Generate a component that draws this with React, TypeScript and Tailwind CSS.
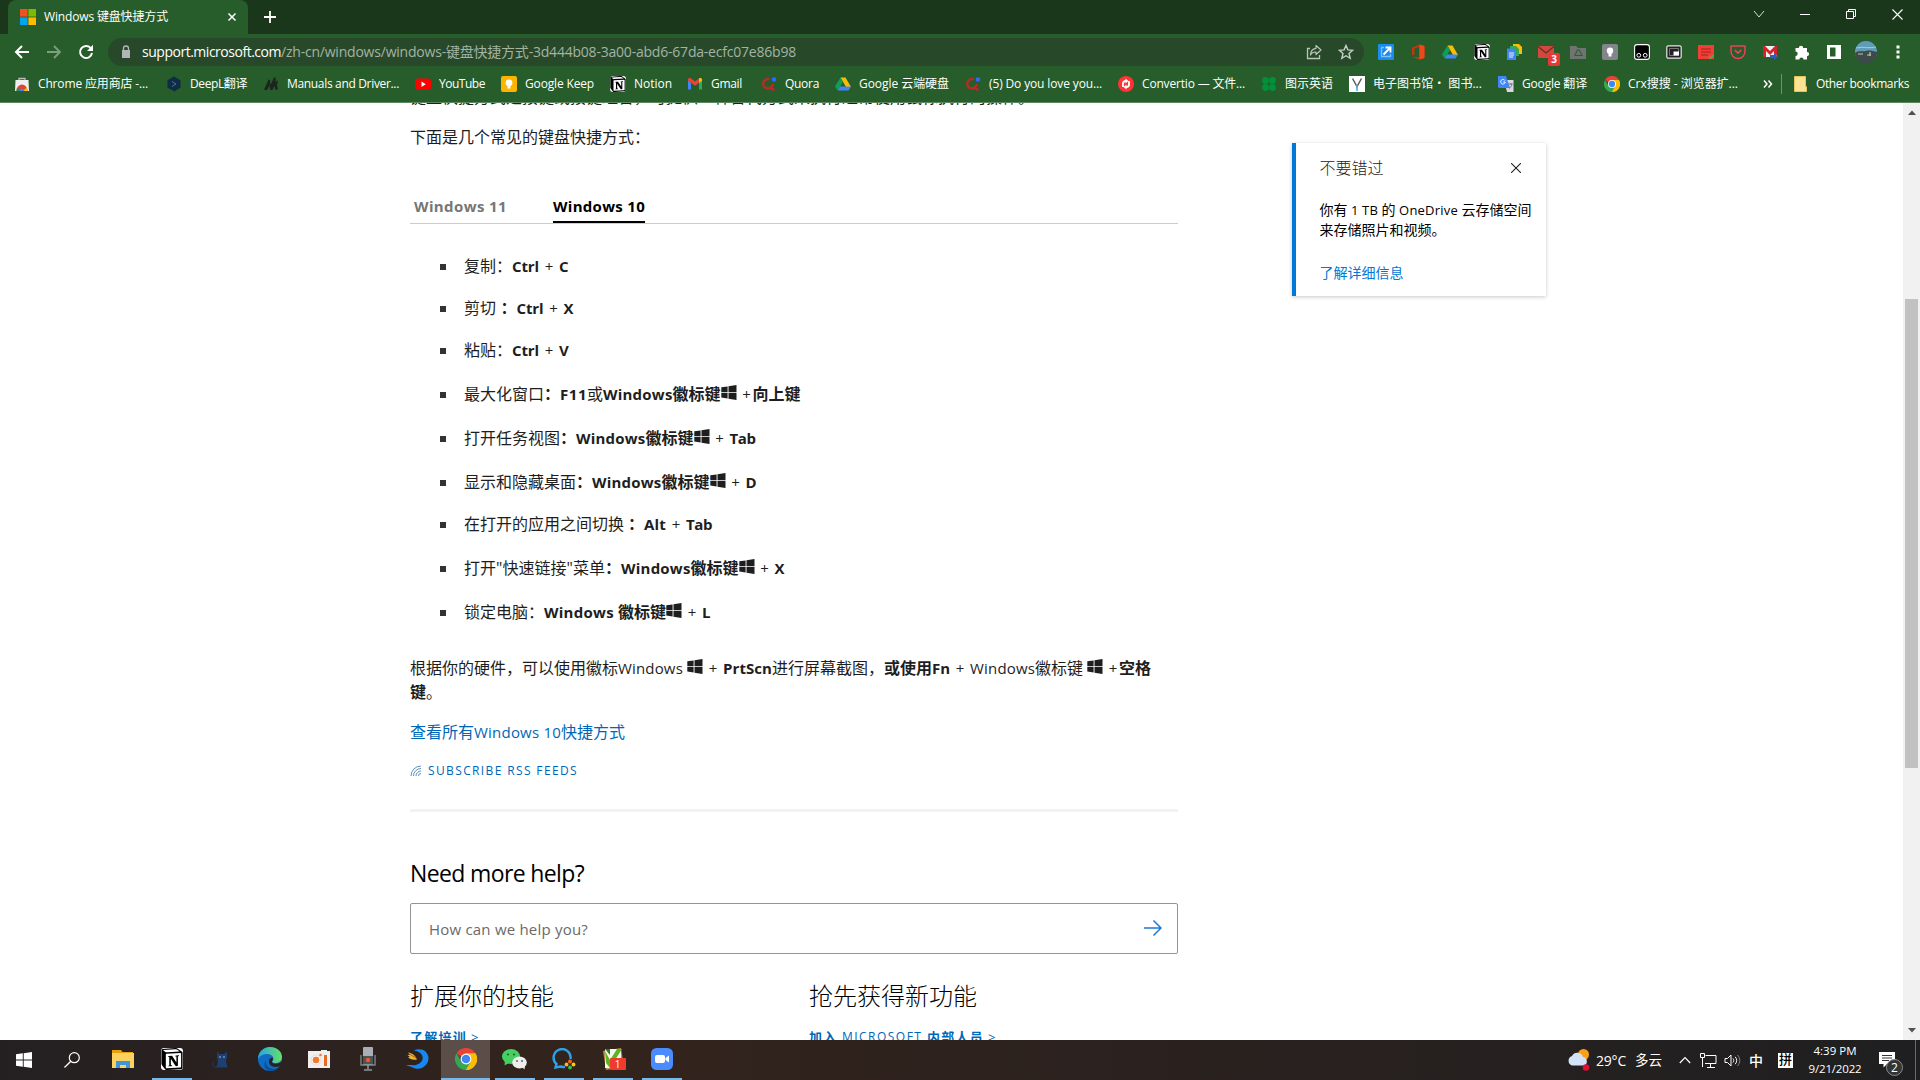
import React, { useLayoutEffect, useRef, useState } from "react";
import { SiNotion } from "react-icons/si";

type Kids = { children?: React.ReactNode };

/* Text set to an exact advance width by spreading the difference between its letters. */
function Fit({ w, className = "", children }: { w: number; className?: string; children: string }) {
  const ref = useRef<HTMLSpanElement>(null);
  const [spacing, setSpacing] = useState(0);
  useLayoutEffect(() => {
    const el = ref.current;
    if (!el) return;
    const natural = el.getBoundingClientRect().width - spacing * children.length;
    setSpacing((w - natural) / children.length);
  }, [w, children]);
  return (
    <span ref={ref} className={"inline-block whitespace-pre " + className} style={{ letterSpacing: `${spacing}px` }}>
      {children}
    </span>
  );
}

function Svg({ s = 16, h, vb = "0 0 16 16", className = "", children }: Kids & { s?: number; h?: number; vb?: string; className?: string }) {
  return (
    <svg width={s} height={h ?? s} viewBox={vb} fill="none" className={"shrink-0 " + className}>
      {children}
    </svg>
  );
}

const MsLogo = () => (
  <Svg>
    <path d="M0 0h7.6v7.6H0z" fill="#f25022" />
    <path d="M8.4 0H16v7.6H8.4z" fill="#7fba00" />
    <path d="M0 8.4h7.6V16H0z" fill="#00a4ef" />
    <path d="M8.4 8.4H16V16H8.4z" fill="#ffb900" />
  </Svg>
);

const Chrome = ({ s = 16 }: { s?: number }) => (
  <Svg s={s} vb="0 0 24 24">
    <path d="M12 12 1.6 6A12 12 0 0 1 22.4 6z" fill="#ea4335" />
    <path d="M12 12V6h10.4A12 12 0 0 1 12 24z" fill="#fbbc04" />
    <path d="M12 24A12 12 0 0 1 1.6 6l5.2 9 5.2 3 5.2-3z" fill="#34a853" />
    <path d="M17.2 15 12 24A12 12 0 0 0 22.4 6H12z" fill="#fbbc04" />
    <circle cx="12" cy="12" r="5.9" fill="#fff" />
    <circle cx="12" cy="12" r="4.7" fill="#4285f4" />
  </Svg>
);

const Drive = () => (
  <Svg>
    <path d="M5.5 1.5h5L16 11h-5z" fill="#fbbc04" />
    <path d="M5.5 1.5 8 6 2.700 14.500 0 10.500z" fill="#0f9d58" />
    <path d="M5 10.500h11l-2.500 4H2.700z" fill="#4285f4" />
  </Svg>
);

const Notion = ({ s = 16 }: { s?: number }) => (
  <span className="flex shrink-0 rounded-[3px] bg-white text-black">
    <SiNotion size={s} />
  </span>
);

const Quora = () => (
  <Svg>
    <path d="M8.500 3.200A4.800 4.800 0 1 0 11.800 8M8.500 10.500c1.500 2.500 3 3.300 5 3" stroke="#b92b27" strokeWidth="2.400" />
    <circle cx="13" cy="3.500" r="2.300" fill="#2e69ff" />
  </Svg>
);

const Gmail = () => (
  <Svg>
    <path d="M1 4v9.500h3V7z" fill="#4285f4" />
    <path d="M12 7v6.500h3V4z" fill="#34a853" />
    <path d="M1 4.500V3.500C1 2 3 1.700 4 2.500L8 5.500l4-3v4.300L8 9.700 1 4.500z" fill="#ea4335" />
    <path d="M12 2.500c1-.8 3-.5 3 1v1.500l-3 2z" fill="#fbbc04" />
  </Svg>
);

const bookmarks: { icon: React.ReactNode; label: string; w: number; cell: string }[] = [
  {
    icon: (
      <Svg>
        <path d="M5 4V2.500h6V4" stroke="#bbb" strokeWidth="1.300" />
        <path d="M1.500 4h13L15 15H1z" fill="#eee" />
        <path d="M2.500 15a5.500 6.500 0 0 1 11 0z" fill="#db4437" />
        <path d="M2.500 15a5.500 5.500 0 0 1 1-3.500l3 3.500z" fill="#0f9d58" />
        <path d="M13.500 15a5.500 5.500 0 0 0-.8-3.500L9 15z" fill="#fbbc04" />
        <path d="M5.800 15a2.200 2.200 0 0 1 4.400 0z" fill="#4285f4" />
      </Svg>
    ),
    label: "Chrome 应用商店 -...", w: 110, cell: "w-[152px]",
  },
  {
    icon: (
      <Svg>
        <path d="m8 .5 6.500 3.700v7.600L9.500 14.500 9 16l-1-1-6.500-3.200V4.200z" fill="#0f2b46" />
        <path d="m6 5.500 4 2.500-4 2.500" stroke="#3c7a8c" strokeWidth="1" />
      </Svg>
    ),
    label: "DeepL翻译", w: 57, cell: "w-[97px]",
  },
  {
    icon: <Svg><path d="M1 14 5.500 3.500 7 4l.5 5L11 1.500h1.800L12.500 6l1.500-1.500.8 1L14 9.500l1 3.500-2.500 1-1-4-2 4H7.200L6.500 9.500 4 14z" fill="#1c2420" /></Svg>,
    label: "Manuals and Driver...", w: 112, cell: "w-[152px]",
  },
  {
    icon: <Svg><rect y="2.500" width="16" height="11.500" rx="3" fill="#f00" /><path d="m6.500 5.500 4.200 2.700-4.200 2.700z" fill="#fff" /></Svg>,
    label: "YouTube", w: 46, cell: "w-[86px]",
  },
  {
    icon: <Svg><rect width="16" height="16" rx="2" fill="#fbb400" /><circle cx="8" cy="6.800" r="3.400" fill="#fff" /><path d="M6.500 9h3v3.500h-3z" fill="#fff" /></Svg>,
    label: "Google Keep", w: 69, cell: "w-[109px]",
  },
  { icon: <Notion />, label: "Notion", w: 38, cell: "w-[77px]" },
  { icon: <Gmail />, label: "Gmail", w: 31, cell: "w-[74px]" },
  { icon: <Quora />, label: "Quora", w: 34, cell: "w-[74px]" },
  { icon: <Drive />, label: "Google 云端硬盘", w: 90, cell: "w-[130px]" },
  { icon: <Quora />, label: "(5) Do you love you...", w: 113, cell: "w-[153px]" },
  {
    icon: (
      <Svg>
        <circle cx="8" cy="8" r="8" fill="#ff3333" />
        <path d="M5 11V7.500A2.500 2.500 0 0 1 7.500 5H8M11 5v3.500A2.500 2.500 0 0 1 8.500 11H8" stroke="#fff" strokeWidth="1.900" />
        <path d="m7.500 2.500 3 2.500-3 2.500zM8.500 8.500v5l-3-2.500z" fill="#fff" />
      </Svg>
    ),
    label: "Convertio — 文件...", w: 103, cell: "w-[143px]",
  },
  {
    icon: (
      <Svg>
        {[4.5, 11.5].map((x) => [4.5, 11.5].map((y) => <circle key={`${x}${y}`} cx={x} cy={y} r="3.400" fill="#00913a" />))}
      </Svg>
    ),
    label: "图示英语", w: 48, cell: "w-[88px]",
  },
  {
    icon: (
      <Svg>
        <path d="M0 0h16v16H0z" fill="#fff" />
        <path d="m3.500 2.500 4.500 8 4.500-8" stroke="#555" strokeWidth="1.400" />
        <path d="M8 9v6" stroke="#4aa8d8" strokeWidth="1.600" />
      </Svg>
    ),
    label: "电子图书馆・ 图书...", w: 109, cell: "w-[149px]",
  },
  {
    icon: (
      <Svg>
        <path d="M6 4h9.500v12H9z" fill="#d5d8dc" />
        <path d="M0 0h8l4 12H1.500A1.500 1.500 0 0 1 0 10.500z" fill="#4285f4" />
        <path d="M7 4.600A2.300 2.300 0 1 0 7.300 6H5.200" stroke="#fff" strokeWidth=".9" />
        <path d="M10.500 8h4M12.800 7v1m1.200 0c-.5 2-1.500 3.500-2.800 4.500" stroke="#5f6b7a" strokeWidth=".9" />
      </Svg>
    ),
    label: "Google 翻译", w: 65, cell: "w-[106px]",
  },
  { icon: <Chrome />, label: "Crx搜搜 - 浏览器扩...", w: 110, cell: "w-[156px]" },
];

const extensions: React.ReactNode[] = [
  <Svg><rect width="16" height="16" rx="1" fill="#1a8cf0" /><path d="M6 3.500H3.500v9h9V10" stroke="#7cc0fa" strokeWidth="1.300" /><path d="M5.500 10.500 12 4M7.500 3.500h5v5" stroke="#fff" strokeWidth="1.800" /></Svg>,
  <Svg><path d="m9.500.5 5 1.500v12l-5 1.500L2 13l7-.1V3.200L4.500 4.500v6L2 11.500V3.500z" fill="#c8320c" /><path d="m9.500.5 5 1.500v12l-5 1.500z" fill="#ea4b1e" /></Svg>,
  <Drive />,
  <Notion />,
  <Svg><path d="M7 0h6l3 3v7H7z" fill="#fbbc04" /><path d="M4 2h6l3 3v7H4z" fill="#34a853" /><path d="M1 4.500h6L10 7v9H1z" fill="#4285f4" /><path d="M3 9h5M3 11h5M3 13h4" stroke="#fff" strokeWidth=".9" /></Svg>,
  <span className="relative flex">
    <Svg><path d="M0 2h16v12H0z" fill="#d3483e" /><path d="m0 2.500 8 6.500 8-6.500" stroke="#6d2a22" strokeWidth="1.300" /></Svg>
    <span className="absolute top-[9px] left-[10px] h-[13px] w-[12px] rounded-[2px] bg-[#e53935] text-center text-[10px] leading-[13px] font-bold text-white">3</span>
  </span>,
  <Svg><path d="M0 2h6l2 2h8v11H0z" fill="#6f7471" /><path d="M7.300 6h1.800l3 5.500H5z" stroke="#276329" strokeWidth="1.100" /></Svg>,
  <Svg><rect width="16" height="16" rx="2" fill="#84848c" /><circle cx="8" cy="6.800" r="3.200" fill="#fff" /><path d="M6.500 9h3v3.500h-3z" fill="#fff" /></Svg>,
  <Svg><rect x=".6" y=".6" width="14.800" height="14.800" rx="2.500" fill="#000" stroke="#fff" strokeWidth="1.100" /><circle cx="4.800" cy="11.300" r="1.900" stroke="#fff" /><circle cx="11.200" cy="11.300" r="1.900" stroke="#fff" /></Svg>,
  <Svg><rect x=".8" y="1.800" width="14.400" height="12.400" rx="1.500" fill="#222" stroke="#e8e8e8" strokeWidth="1.200" /><path d="M3.500 4.500h9v7h-9z" stroke="#777" /><path d="M7.500 7.500h5.500v4H7.500z" fill="#fff" /></Svg>,
  <Svg><path d="M0 1h16v14H0z" fill="#ef4037" /><path d="M3 5h10M3 8h10M3 11h7" stroke="#a81f1c" strokeWidth="1.100" /><path d="m11 12.500 1.500 2L15.500 11" stroke="#4caf50" strokeWidth="1.400" /></Svg>,
  <Svg><path d="M1 2h14v5.500a7 7 0 0 1-14 0z" stroke="#ee4056" strokeWidth="1.500" strokeLinejoin="round" /><path d="m4.800 6.200 3.200 3 3.200-3" stroke="#ee4056" strokeWidth="1.700" /></Svg>,
  <Svg><path d="M1 2h14v11H1z" fill="#eee" /><path d="M1 13V2h2l5 5 5-5h2v9h-3V7l-4 4-4-4v6z" fill="#d3232a" /><path d="M8 11h4V9l4 3.500L12 16v-2H8z" fill="#3559c7" /></Svg>,
  <Svg><path d="M1.500 4h3.300a2.200 2.200 0 1 1 4.400 0H13v4a2.100 2.100 0 1 1 0 4.200v3.300H9.500a2.100 2.100 0 1 0-4.200 0H1.500V12a2.200 2.200 0 1 0 0-4.400z" fill="#fff" /></Svg>,
  <Svg><path d="M1 1h14v14H1zM4 3.500v9h5.500v-9z" fill="#fff" fillRule="evenodd" /></Svg>,
];

function TitleBar() {
  return (
    <div className="flex h-[34px] shrink-0 bg-[#1b371b] pl-2">
      <div className="flex h-[34px] w-[240px] items-center rounded-t-lg bg-[#275d2a] pr-[10px] pl-3">
        <MsLogo />
        <Fit w={124} className="ml-2 text-[12px] text-white">Windows 键盘快捷方式</Fit>
        <Svg s={10} vb="0 0 10 10" className="mr-[1px] ml-auto"><path d="m1.500 1.500 7 7m0-7-7 7" stroke="#fff" strokeWidth="1.500" /></Svg>
      </div>
      <Svg s={14} vb="0 0 14 14" className="mt-[10px] ml-[15px]"><path d="M7 1v12M1 7h12" stroke="#fff" strokeWidth="1.800" /></Svg>
      <div className="ml-auto flex h-[28px] items-center text-white">
        <span className="flex w-[46px] justify-center"><Svg s={12} vb="0 0 12 12"><path d="m1 3 5 6 5-6" stroke="#d5dcd5" /></Svg></span>
        <span className="flex w-[46px] justify-center"><Svg s={10} vb="0 0 10 10"><path d="M0 5.500h10" stroke="#fff" /></Svg></span>
        <span className="flex w-[46px] justify-center"><Svg s={10} vb="0 0 10 10"><path d="M.5 2.500h7v7h-7zM2.500 2.500v-2h7v7h-2" stroke="#fff" /></Svg></span>
        <span className="flex w-[46px] justify-center"><Svg s={11} vb="0 0 11 11"><path d="m.5.500 10 10m0-10-10 10" stroke="#fff" strokeWidth="1.100" /></Svg></span>
      </div>
    </div>
  );
}

function Toolbar() {
  return (
    <div className="flex h-[36px] shrink-0 items-center bg-[#275d2a] pl-[14px]">
      <Svg><path d="M15 8H2.500M8 2 2 8l6 6" stroke="#fff" strokeWidth="2" /></Svg>
      <Svg className="ml-4"><path d="M1 8h12.500M8 2l6 6-6 6" stroke="#7c9f7d" strokeWidth="1.800" /></Svg>
      <Svg className="ml-4"><path d="M13 4.500A6 6 0 1 0 14 9" stroke="#fff" strokeWidth="2" /><path d="M15 .8V7H9z" fill="#fff" /></Svg>
      <div className="ml-[14px] flex h-[28px] w-[1256px] items-center rounded-full bg-[#27492a] pl-[13px]">
        <Svg s={10} h={13} vb="0 0 10 13" className="-mt-px"><path d="M1 5h8v8H1z" fill="#b3b5b9" /><path d="M2.500 6V3.500a2.500 2.500 0 0 1 5 0V6" stroke="#b3b5b9" strokeWidth="1.300" /></Svg>
        <Fit w={139} className="mb-[2px] ml-[11px] text-[14px] text-white">support.microsoft.com</Fit>
        <Fit w={515} className="mb-[2px] text-[14px] text-[#a3b3a4]">/zh-cn/windows/windows-键盘快捷方式-3d444b08-3a00-abd6-67da-ecfc07e86b98</Fit>
        <Svg className="mr-4 ml-auto"><path d="M4 4.500H1.500v10h12V11" stroke="#b9c5b9" strokeWidth="1.300" /><path d="M10 1.500 15 6l-5 4.500V8C7 8 5.500 9 4.500 11 4.500 7.500 6.500 4.800 10 4.300z" stroke="#b9c5b9" strokeWidth="1.200" strokeLinejoin="round" /></Svg>
        <Svg className="mr-[10px]"><path d="m8 1.500 1.900 4.400 4.800.4L11 9.500l1.200 4.800L8 11.700l-4.200 2.600L5 9.500 1.300 6.300l4.800-.4z" stroke="#c6d0c6" strokeWidth="1.400" /></Svg>
      </div>
      <div className="ml-[14px] flex gap-4">
        {extensions.map((e, i) => <span key={i} className="flex size-4">{e}</span>)}
      </div>
      <Svg s={22} h={26} vb="0 0 22 26" className="ml-[13px]">
        <ellipse cx="11" cy="13" rx="11" ry="11" fill="#5f9cb8" />
        <path d="M0 14c4-3 8-1 11-2s7 0 11 1a11 11 0 0 1-22 1z" fill="#3c4b48" />
        <path d="M1 9c6-2 12 1 20-1" stroke="#9cc4d4" strokeWidth="1.200" />
        <path d="M3 15h5m4 1h4m-1-3v4" stroke="#c7c3b4" strokeWidth="1.200" />
      </Svg>
      <Svg s={4} h={16} vb="0 0 4 16" className="ml-[19px]"><path d="M.5 1.500h3v3h-3zm0 5h3v3h-3zm0 5h3v3h-3z" fill="#fff" /></Svg>
    </div>
  );
}

function Bookmarks() {
  return (
    <div className="flex h-[33px] shrink-0 items-center border-b border-[#5c865e] bg-[#275d2a] pb-[4px] pl-[14px] text-[12px] text-white">
      {bookmarks.map((b) => (
        <div key={b.label} className={"flex shrink-0 items-center gap-2 " + b.cell}>
          {b.icon}
          <Fit w={b.w} className="mb-px">{b.label}</Fit>
        </div>
      ))}
      <Svg s={10} vb="0 0 10 10" className="ml-[3px]"><path d="m1 1.500 3 3.500-3 3.500M5.500 1.500l3 3.500-3 3.500" stroke="#fff" strokeWidth="1.500" /></Svg>
      <div className="ml-[8px] h-5 w-px bg-[#6f9271]" />
      <Svg s={13} h={16} vb="0 0 13 16" className="ml-[12px]"><path d="M.5.500h11v10h1v5H.5z" fill="#fde293" stroke="#e8c55a" /></Svg>
      <Fit w={93} className="mb-px ml-[9px]">Other bookmarks</Fit>
    </div>
  );
}

const WinKey = ({ className = "" }: { className?: string }) => (
  <svg width="16" height="15" viewBox="0 0 16 15" className={"inline-block align-[0px] " + className}>
    <path d="M.3 2.300 6.600 1.400v5.500H.3zM7.500 1.300 15.500 0v6.900h-8zM.3 7.800h6.300v5.600L.3 12.500zM7.500 7.800h8V15l-8-1.300z" fill="#1e1e1e" />
  </svg>
);

const B = ({ children, w }: { children: string; w?: number }) =>
  w ? <Fit w={w} className="text-[15px] font-bold">{children}</Fit> : <b className="font-bold">{children}</b>;
const Plus = ({ tight = false }: { tight?: boolean }) => (
  <span className={"inline-block text-center text-[15px] " + (tight ? "w-[16px] pl-[4px]" : "w-[20px]")}>+</span>
);

const shortcuts: { h: string; body: React.ReactNode }[] = [
  { h: "h-[42px]", body: <>复制：<B w={27}>Ctrl</B><Plus /><B w={11}>C</B></> },
  { h: "h-[42px]", body: <>剪切<b className="ml-[4.500px]">：</b><B w={27}>Ctrl</B><Plus /><B w={11}>X</B></> },
  { h: "h-[42px]", body: <>粘贴：<B w={27}>Ctrl</B><Plus /><B w={11}>V</B></> },
  { h: "h-[45px]", body: <>最大化窗口<B>：</B><B w={27}>F11</B>或<B w={69.5}>Windows</B><B>徽标键</B><WinKey /><Plus tight /><B>向上键</B></> },
  { h: "h-[44px]", body: <>打开任务视图<B>：</B><B w={69.5}>Windows</B><B>徽标键</B><WinKey /><Plus /><B w={26}>Tab</B></> },
  { h: "h-[43px]", body: <>显示和隐藏桌面<B>：</B><B w={69.5}>Windows</B><B>徽标键</B><WinKey /><Plus /><B w={12}>D</B></> },
  { h: "h-[42px]", body: <>在打开的应用之间切换<b className="ml-[4px]">：</b><B w={22}>Alt</B><Plus /><B w={26}>Tab</B></> },
  { h: "h-[45px]", body: <>打开<Fit w={6.5}>"</Fit>快速链接<Fit w={6.5}>"</Fit>菜单<B>：</B><B w={69.5}>Windows</B><B>徽标键</B><WinKey /><Plus /><B w={11}>X</B></> },
  { h: "h-[44px]", body: <>锁定电脑：<B w={74}>Windows </B><B>徽标键</B><WinKey /><Plus /><B w={8}>L</B></> },
];

function Article() {
  return (
    <main className="flex w-[768px] flex-col text-[16px] text-[#1e1e1e] *:shrink-0">
      <p className="-mt-[18px] h-6 leading-6 whitespace-nowrap">键盘快捷方式是按键或按键组合，可提供一种替代方式来执行通常使用鼠标执行的操作。</p>
      <p className="mt-[16px] h-6 leading-6">下面是几个常见的键盘快捷方式：</p>
      <div className="mt-[44px] flex h-[31px] border-b border-[#ccc] pl-1">
        <Fit w={93} className="text-[15px] leading-[26px] font-bold text-[#767676]">Windows 11</Fit>
        <div className="ml-[46px] h-[30px] border-b-2 border-black leading-[26px]">
          <Fit w={92} className="text-[15px] font-bold text-black">Windows 10</Fit>
        </div>
      </div>
      <ul className="mt-[21px] flex flex-col">
        {shortcuts.map((s, i) => (
          <li key={i} className={"flex items-center pl-[30px] whitespace-nowrap " + s.h}>
            <span className="mt-[2px] mr-[18px] size-[6px] bg-[#333]" />
            <span className="block h-6 leading-6">{s.body}</span>
          </li>
        ))}
      </ul>
      <p className="mt-[22px] h-12 leading-6 whitespace-nowrap">
        根据你的硬件，可以使用徽标<Fit w={69} className="text-[15px]">Windows </Fit><WinKey /><Plus /><B w={49}>PrtScn</B>进行屏幕截图，<B>或使用</B><B w={18}>Fn</B><Plus /><Fit w={65} className="text-[15px]">Windows</Fit>徽标键<WinKey className="ml-1" /><Plus tight /><B>空格</B>
        <br />
        <B>键</B>。
      </p>
      <a className="mt-[16px] flex h-6 items-center text-[#0067b8]">查看所有<Fit w={87} className="text-[15px]">Windows 10</Fit>快捷方式</a>
      <a className="mt-[16px] flex h-[22px] items-center text-[#0067b8]">
        <Svg s={12} vb="0 0 12 12" className="mr-[6px]"><path d="M1 11A10 10 0 0 1 11 1M3.500 11A7.500 7.500 0 0 1 11 3.500M6 11a5 5 0 0 1 5-5M8.500 11A2.500 2.500 0 0 1 11 8.500" stroke="#4a86b8" strokeWidth=".9" /></Svg>
        <Fit w={150} className="text-[12px] font-medium">SUBSCRIBE RSS FEEDS</Fit>
      </a>
      <div className="mt-[27px] h-[3px] bg-[#f2f2f2]" />
      <h2 className="mt-[43px] h-9 leading-9 text-black"><Fit w={174} className="text-[23px]">Need more help?</Fit></h2>
      <div className="mt-[12px] flex h-[51px] items-center justify-between rounded-[2px] border border-[#949494] pr-[15px] pl-[18px]">
        <Fit w={159} className="mt-[2px] text-[15px] text-[#6a6a6a]">How can we help you?</Fit>
        <Svg s={18} vb="0 0 18 18" className="mb-px"><path d="M0 9h17M9.500 1.500 17 9l-7.500 7.500" stroke="#1e78d2" strokeWidth="1.500" /></Svg>
      </div>
      <div className="mt-[24px] grid grid-cols-[399px_1fr] text-[24px] leading-9 font-light text-black">
        <h3>扩展你的技能</h3>
        <h3>抢先获得新功能</h3>
      </div>
      <div className="mt-[13px] grid grid-cols-[399px_1fr] text-[13px] leading-[20px] font-bold text-[#0067b8]">
        <a className="flex"><Fit w={57}>了解培训</Fit><span className="ml-[4px] font-normal">&gt;</span></a>
        <a className="flex"><Fit w={33}>加入 </Fit><Fit w={85} className="text-[12px] font-medium">MICROSOFT </Fit><Fit w={57}>内部人员</Fit><span className="ml-[4px] font-normal">&gt;</span></a>
      </div>
    </main>
  );
}

function Promo() {
  return (
    <aside className="mt-[40px] ml-[114px] flex h-[153px] w-[254px] flex-col border-l-4 border-[#0078d7] bg-white pt-[13px] pr-[15px] pl-[23.5px] text-[14px] text-black shadow-[0_1px_4px_rgba(0,0,0,0.22)] *:shrink-0">
      <div className="flex h-6 items-center justify-between pr-[10px] text-[16px] font-light text-[#222]">
        不要错过
        <Svg s={10} vb="0 0 10 10"><path d="m0 0 10 10M10 0 0 10" stroke="#222" strokeWidth="1.100" /></Svg>
      </div>
      <p className="mt-[20px] text-[14px] leading-[19px] whitespace-nowrap">
        你有<Fit w={34} className="text-[13px]"> 1 TB </Fit>的<Fit w={66} className="text-[13px]"> OneDrive </Fit>云存储空间<br />来存储照片和视频。
      </p>
      <a className="mt-[24px] leading-5 text-[#0078d7]">了解详细信息</a>
    </aside>
  );
}

const Tri = ({ up = false }: { up?: boolean }) => (
  <Svg s={8} h={5} vb="0 0 8 5"><path d={up ? "M0 5 4 .5 8 5z" : "M0 0l4 4.500L8 0z"} fill="#505050" /></Svg>
);

const apps: { icon: React.ReactNode; open?: boolean; active?: boolean }[] = [
  { icon: <Svg s={22} h={18} vb="0 0 22 18"><path d="M0 0h9l1.500 2H21v5H0z" fill="#e8a10c" /><path d="M0 3h22v15H0z" fill="#fbd25f" /><path d="M4 18v-7h14v7h-4v-3H8v3z" fill="#3c97d9" /></Svg> },
  { icon: <Notion s={22} />, open: true },
  { icon: <Svg s={17} vb="0 0 17 17"><path d="M5 .5 7.500 3H12L15 .5V7l-1 3 1.500 6.500H4.500L6 10 5 7z" fill="#1d3f72" /><path d="M5 16C1 16.500 0 14 1.500 11.500" stroke="#1d3f72" /><circle cx="8" cy="6" r=".8" fill="#b6c8de" /><circle cx="12" cy="6" r=".8" fill="#b6c8de" /></Svg> },
  {
    icon: (
      <Svg s={24} vb="0 0 24 24">
        <defs>
          <linearGradient id="edgeTop" x1="0" x2="1"><stop stopColor="#2aa5e0" /><stop offset="1" stopColor="#66df6a" /></linearGradient>
        </defs>
        <circle cx="12" cy="12" r="12" fill="#0f6cc4" />
        <path d="M0 11C1 4 6 0 12 0c7 0 12 4.500 12 10 0 4-3 6-7 6-2.500 0-3.500-1-2.500-2.200C17 11 14 7 9.500 7 5 7 1.500 9 0 12z" fill="url(#edgeTop)" />
        <path d="M8 13.500c-1 5 3.500 8.500 8 8.500 2.500 0 4.500-1.300 6-3a12 12 0 0 1-9 5C6 23 5 17 8 13.500z" fill="#0b4f9c" />
        <path d="M14.500 13.500c-1.500 2 .5 3.200 3.500 3.200 2 0 4-.7 5.500-2.500L24 17l-2 2c-5 2.500-12 0-11-5.500.5-2 2.500-3 3.500-2.500.8.500.6 1.700 0 2.500z" fill="#2b2220" />
      </Svg>
    ),
  },
  { icon: <Svg s={22} h={18} vb="0 0 22 18"><path d="M0 1h13V0h6v1h3v17H0z" fill="#efefef" /><circle cx="8" cy="10" r="4" fill="#f07b34" stroke="#fff" /><circle cx="8" cy="10" r="5" stroke="#d8d0cc" strokeWidth=".6" /><circle cx="12.500" cy="5" r="1.300" fill="#f07b34" /><path d="M16 5h3v11h-3z" fill="#e66a24" /></Svg> },
  { icon: <Svg s={16} h={24} vb="0 0 16 24"><rect x="3" width="10" height="18" rx="1" fill="#a9b0b5" /><path d="M1 8v10h14V8" stroke="#7d868c" strokeWidth="1.400" /><path d="M3 9h10v8H3z" fill="#4d5356" /><circle cx="8" cy="13" r="2.200" fill="#f15a24" /><path d="M8 18v4M4 23h8" stroke="#8d969c" strokeWidth="1.600" /></Svg> },
  { icon: <Svg s={24} h={22} vb="0 0 24 22"><path d="M9 2.500C15-1 23.500 2.500 23.500 10c0 7.500-7 12-13 10.500C7 19.500 5 18 1 17.500c4.500-1 6.500.3 9.500-.5 5-1.200 8-4.500 7-8.500C16.500 5 13.500 3.500 9 2.500z" fill="#1787f5" /><path d="M3 4.500c4 .5 7 2.500 9 7-4 .8-7 0-9-2.200l2-.3-2.500-2 2.500-.2z" fill="#f2b632" /><path d="m4.500 6 6.500 4" stroke="#7c4a12" strokeWidth=".7" /></Svg> },
  { icon: <Chrome s={22} />, open: true, active: true },
  {
    icon: (
      <Svg s={25} h={21} vb="0 0 25 21">
        <ellipse cx="9" cy="7.500" rx="9" ry="7.500" fill="#45cf62" /><path d="m3 12-.5 4.500L7 14z" fill="#45cf62" />
        <ellipse cx="17.500" cy="13.500" rx="7.300" ry="6" fill="#eee" /><path d="m20 18 2.500 2.500.5-4z" fill="#eee" />
        <circle cx="6" cy="5.500" r="1.100" fill="#1b6b2e" /><circle cx="12" cy="5.500" r="1.100" fill="#1b6b2e" />
        <circle cx="15" cy="12" r=".9" fill="#555" /><circle cx="20" cy="12" r=".9" fill="#555" />
      </Svg>
    ),
    open: true,
  },
  { icon: <Svg s={24} h={22} vb="0 0 24 22"><path d="M18.500 11A8.500 8.500 0 1 0 4.500 16L3.500 19.500l5-1c2 .7 3 .7 4.500.3" stroke="#2ba3ea" strokeWidth="2.400" /><circle cx="18" cy="13.500" r="2" fill="#fb6500" /><circle cx="21.500" cy="16.500" r="1.900" fill="#ffcc00" /><circle cx="18" cy="19.500" r="1.900" fill="#2dbc5e" /><circle cx="14.500" cy="16.500" r="1.900" fill="#f2b632" /></Svg>, open: true },
  {
    icon: (
      <span className="relative flex">
        <Svg s={22} vb="0 0 22 22"><path d="M1 3 19 0l3 19-18 3z" fill="#b98a52" /><path d="M3 1h16v19H3z" fill="#f4f7ef" /><path d="m3 3 5 9 7-11h5L8 20 4 15z" fill="#5eb61f" /><path d="M3 1h5v6z" fill="#2c7a1d" /></Svg>
        <span className="absolute top-[10px] left-[8px] h-[12px] w-[16px] rounded-[1px] bg-[#ee3b2e] text-center text-[10px] leading-[12px] text-white">1</span>
      </span>
    ),
    open: true,
  },
  { icon: <Svg s={22} vb="0 0 22 22"><rect width="22" height="22" rx="5.500" fill="#4a8cff" /><rect x="4" y="7" width="10" height="8" rx="2" fill="#fff" /><path d="m14.500 10 3.500-2.500v7L14.500 12z" fill="#fff" /></Svg>, open: true },
];

function Taskbar() {
  return (
    <footer className="flex h-10 shrink-0 items-center bg-linear-to-r from-[#242022] via-[#33231c] via-30% to-[#1f1f21] text-white">
      <span className="flex w-12 justify-center">
        <Svg><path d="M0 2.300 6.800 1.300v6.200H0zM7.700 1.200 16 0v7.500H7.700zM0 8.500h6.800v6.200L0 13.700zM7.700 8.500H16V16l-8.300-1.200z" fill="#fff" /></Svg>
      </span>
      <span className="mr-[2px] flex w-12 justify-center">
        <Svg><circle cx="10.300" cy="5.700" r="5" stroke="#fff" strokeWidth="1.200" /><path d="M6.800 9.200.5 15.500" stroke="#fff" strokeWidth="1.300" /></Svg>
      </span>
      {apps.map((a, i) => (
        <span key={i} className={"flex h-10 w-[49px] flex-col items-center justify-end " + (a.active ? "bg-[#5b4e49]" : "")}>
          <span className="flex h-[38px] items-center">{a.icon}</span>
          <span className={"h-[2px] " + (a.open ? "bg-[#76b9ed] " : "") + (a.active ? "w-full" : "w-10")} />
        </span>
      ))}
      <div className="ml-auto flex h-10 items-center">
        <Svg s={24} vb="0 0 24 24" className="-ml-[2px] mr-[2px]"><circle cx="16.500" cy="6.500" r="5.500" fill="#f9a01b" /><path d="M5 17.500a5 5 0 0 1 0-9.500 6 6 0 0 1 11 1 4.400 4.400 0 0 1 1 8.500z" fill="#d3e2f5" /><circle cx="19" cy="19.500" r="3.300" fill="#e01030" /></Svg>
        <Fit w={30} className="ml-[3px] text-[14px]">29°C</Fit>
        <span className="ml-[9px] text-[13.500px]">多云</span>
        <Svg s={12} vb="0 0 12 12" className="ml-[17px]"><path d="m.8 9 5.200-5.500L11.200 9" stroke="#fff" strokeWidth="1.200" /></Svg>
        <Svg s={17} vb="0 0 17 17" className="ml-[9px]"><path d="M5.500 3.500h10.500v8H5M10.500 11.500V15M7 15.500h8M.5 1.500h4v4h-4zM2.500 5.500v9.500" stroke="#fff" /></Svg>
        <Svg s={17} vb="0 0 17 17" className="ml-[7px]"><path d="M1 6.500h2.500L7 3v11l-3.500-3.500H1zM9 6.500c1 1.300 1 2.700 0 4M11.200 4.800c2 2.400 2 5 0 7.400" stroke="#fff" /><path d="M13.500 3c3 3.500 3 7.500 0 11" stroke="#888" /></Svg>
        <span className="ml-[8px] text-[14px] font-medium">中</span>
        <span className="ml-[15px] flex size-[15px] items-center justify-center bg-white text-[13px] font-medium text-black">拼</span>
        <div className="ml-[15px] flex w-[54px] flex-col items-center text-[12px] leading-[18px] whitespace-nowrap">
          <Fit w={43} className="text-[11.500px]">4:39 PM</Fit>
          <Fit w={53} className="text-[11.500px]">9/21/2022</Fit>
        </div>
        <span className="relative ml-[17px] flex">
          <Svg s={16} h={16}><path d="M0 0h16v12H8l-3.500 3.500V12H0z" fill="#fff" /><path d="M3 3.500h10M3 6h10M3 8.500h7" stroke="#333" /></Svg>
          <span className="absolute top-[7px] left-[7px] size-[17px] rounded-full border border-[#8a8a8a] bg-[#333436] text-center text-[12px] leading-[15px] font-medium">2</span>
        </span>
        <span className="mr-1 ml-[20px] h-10 w-px bg-[#6a6a6a]" />
      </div>
    </footer>
  );
}

export default function App() {
  return (
    <div lang="zh-CN" className="flex h-[1080px] w-[1920px] flex-col overflow-hidden bg-white font-['Open_Sans','Noto_Sans_CJK_SC',sans-serif]">
      <TitleBar />
      <Toolbar />
      <Bookmarks />
      <div className="flex h-[937px] overflow-hidden pl-[410px]">
        <Article />
        <Promo />
        <div className="ml-auto flex w-[17px] flex-col items-center justify-between bg-[#f1f1f1] py-[7px]">
          <Tri up />
          <div className="mt-[184px] mb-auto h-[469px] w-[13px] bg-[#c1c1c1]" />
          <Tri />
        </div>
      </div>
      <Taskbar />
    </div>
  );
}
